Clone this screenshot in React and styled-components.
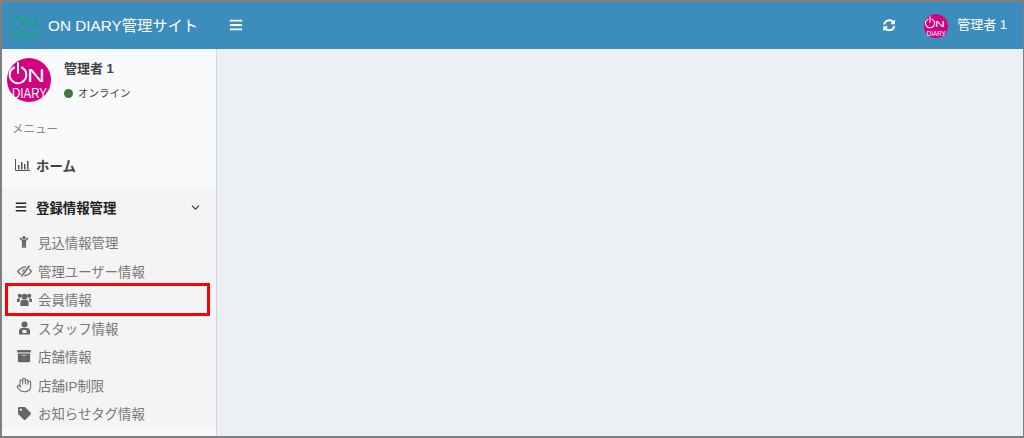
import React from "react";
import styled, { createGlobalStyle } from "styled-components";
import { FaBars, FaChild, FaArchive, FaTag, FaSyncAlt } from "react-icons/fa";
import { ChevronDown, Hand } from "lucide-react";

const Global = createGlobalStyle`
  html, body { margin: 0; padding: 0; height: 100%; }
  body { font-family: "Liberation Sans", "Noto Sans CJK JP", sans-serif; background: #ecf0f5; }
`;
const Frame = styled.div`
  box-sizing: border-box; width: 1024px; height: 438px; overflow: hidden;
  border: solid #7f7f7f; border-width: 2px 1px 2px 2px;
  display: flex; flex-direction: column; background: #ecf0f5;
`;
const Header = styled.header`
  height: 47px; flex: none; background: #3c8dbc; color: #fff;
  display: flex; align-items: center;
`;
const Brand = styled.div`
  width: 214px; flex: none; display: flex; align-items: center; padding-left: 6px; box-sizing: border-box; gap: 6px;
  font-size: 15.3px; white-space: nowrap;
`;
const BrandName = styled.span`
  margin-top: -4px;
`;
const MenuToggle = styled.div`
  font-size: 14px; display: flex; margin-left: 13px; margin-top: -1px;
`;
const HeaderRight = styled.div`
  margin-left: auto; display: flex; align-items: center; font-size: 13px; padding-right: 16px;
`;
const Refresh = styled.div`
  display: flex; font-size: 12.5px; margin-right: 29px; margin-top: -1px;
`;
const UserName = styled.span`
  margin-left: 9px; margin-top: -4px;
`;
const Body = styled.div`
  flex: 1; display: flex; min-height: 0;
`;
const Sidebar = styled.aside`
  width: 215px; flex: none; box-sizing: border-box; background: #f9fafc; border-right: 1px solid #d2d6de;
  display: flex; flex-direction: column;
`;
const Profile = styled.div`
  height: 72px; flex: none; display: flex; padding: 9px 0 0 5px; box-sizing: border-box;
`;
const ProfileInfo = styled.div`
  margin-left: 13px; padding-top: 3px;
`;
const ProfileName = styled.div`
  font-size: 13px; font-weight: bold; color: #444; line-height: 15px;
`;
const Status = styled.div`
  display: flex; align-items: center; gap: 5px; font-size: 10.5px; color: #444; margin-top: 10px; line-height: 14px;
`;
const Dot = styled.span`
  width: 9px; height: 9px; border-radius: 50%; background: #3c763d; display: block;
`;
const SectionLabel = styled.div`
  font-size: 11.5px; color: #888; height: 24px; line-height: 16px; padding-left: 10px;
`;
const HomeItem = styled.div`
  height: 44px; display: flex; align-items: center; padding-left: 13px; font-size: 13.4px; font-weight: bold; color: #444; flex: none; gap: 6px; margin-top: -2px;
`;
const Group = styled.div`
  background: #f4f4f5;
`;
const GroupHead = styled.div`
  height: 40px; display: flex; align-items: center; padding: 0 14px 0 13px; font-size: 13.4px; font-weight: bold; color: #222; gap: 9px;
`;
const Chevron = styled.span`
  margin-left: auto; display: flex; color: #333;
`;
const SubList = styled.div`
  display: flex; flex-direction: column; padding: 1px 0;
`;
const SubItem = styled.div`
  height: 28.5px; display: flex; align-items: center; position: relative; padding-left: 14px; font-size: 13.4px; color: #777; gap: 6px;
  ${p => p.$marked ? `&::after { content: ""; position: absolute; left: 3px; top: -2px; width: 205px; height: 33px; box-sizing: border-box; border: 3px solid #f00; }` : ""}
`;
const IconSlot = styled.span`
  width: 16px; flex: none; display: flex; justify-content: center; align-items: center; font-size: ${p => p.$size || 13}px; color: #666;
`;
const LogoSvg = styled.svg`
  display: block; flex: none; overflow: visible;
`;
const IconSvg = styled.svg`
  display: block;
`;

const Logo = ({ size, bg, fg }) => (
  <LogoSvg width={size} height={size} viewBox="0 0 44 44">
    {bg && <circle cx="22" cy="22" r="22" fill={bg} />}
    <path d="M7.200 9.500a8.300 8.300 0 1 0 7.600 0" fill="none" stroke={fg} strokeWidth="2" strokeLinecap="round" />
    <path d="M11 5v10" stroke={fg} strokeWidth="2" strokeLinecap="round" />
    <text x="20" y="23.500" fontFamily="Liberation Sans" fontSize="18" textLength="18" lengthAdjust="spacingAndGlyphs" fill={fg}>N</text>
    <text x="5" y="39.500" fontFamily="Liberation Sans" fontSize="14.500" textLength="35" lengthAdjust="spacingAndGlyphs" fill={fg}>DIARY</text>
  </LogoSvg>
);
const ChartIcon = () => (
  <IconSvg width="15" height="12" viewBox="0 0 15 12">
    <path d="M.5 0v11.500H15" fill="none" stroke="#555" strokeWidth="1" />
    <path d="M3 6h1.500v4.500H3zM6 3h1.500v7.500H6zM9 5h1.500v5.500H9zM12 2h1.500v8.500H12z" fill="#555" />
  </IconSvg>
);
const EyeIcon = () => (
  <IconSvg width="15" height="12" viewBox="0 0 15 12">
    <path d="M.8 6.500C3 3.500 5.500 2.200 7.800 2.200c2.400 0 4.600 1.300 6.500 4.300-2 3-4.200 4-6.500 4C5.300 10.500 3 9.500.8 6.500z" fill="none" stroke="#666" strokeWidth="1.300" />
    <circle cx="7.500" cy="6.300" r="2.300" fill="#666" />
    <path d="M12.500 .5L4.500 11.500" stroke="#f4f4f5" strokeWidth="3.200" />
    <path d="M12.500 .5L4.500 11.500" stroke="#666" strokeWidth="1.400" />
  </IconSvg>
);
const UsersIcon = () => (
  <IconSvg width="15" height="13" viewBox="0 0 15 13">
    <circle cx="2.800" cy="2.800" r="2.100" fill="#666" />
    <circle cx="12.200" cy="2.800" r="2.100" fill="#666" />
    <circle cx="7.500" cy="3.600" r="2.900" fill="#666" />
    <path d="M0 9V6.800C0 5.900.7 5.400 1.500 5.400h2c-.3 1-1 1.800-1 3.600zM15 9V6.800c0-.9-.7-1.400-1.500-1.400h-2c.3 1 1 1.800 1 3.600z" fill="#666" />
    <path d="M3.400 13V9.500c0-1.800 1.100-2.700 2.100-2.700h4c1 0 2.100.9 2.100 2.700V13z" fill="#666" />
  </IconSvg>
);
const StaffIcon = () => (
  <IconSvg width="13" height="14" viewBox="0 0 13 14">
    <circle cx="6.500" cy="3.500" r="3" fill="#666" />
    <path d="M1 13.500V10c0-2 1.500-3 3-3h5c1.500 0 3 1 3 3v3.500z" fill="#666" />
    <rect x="4.500" y="9" width="4" height="3" fill="#f4f4f5" />
  </IconSvg>
);

const items = [
  { icon: <FaChild />, size: 12, label: "見込情報管理" },
  { icon: <EyeIcon />, label: "管理ユーザー情報" },
  { icon: <UsersIcon />, label: "会員情報", marked: true },
  { icon: <StaffIcon />, label: "スタッフ情報" },
  { icon: <FaArchive />, size: 14, label: "店舗情報" },
  { icon: <Hand size={16} strokeWidth={1.6} color="#666" />, label: "店舗IP制限" },
  { icon: <FaTag />, size: 13, label: "お知らせタグ情報" },
];

export default function App() {
  return (
    <Frame>
      <Global />
      <Header>
        <Brand>
          <Logo size={34} fg="#12a57a" />
          <BrandName>ON DIARY管理サイト</BrandName>
        </Brand>
        <MenuToggle><FaBars /></MenuToggle>
        <HeaderRight>
          <Refresh><FaSyncAlt /></Refresh>
          <Logo size={24} bg="#d6007f" fg="#fff" />
          <UserName>管理者 1</UserName>
        </HeaderRight>
      </Header>
      <Body>
        <Sidebar>
          <Profile>
            <Logo size={44} bg="#d6007f" fg="#fff" />
            <ProfileInfo>
              <ProfileName>管理者 1</ProfileName>
              <Status><Dot />オンライン</Status>
            </ProfileInfo>
          </Profile>
          <SectionLabel>メニュー</SectionLabel>
          <HomeItem><ChartIcon />ホーム</HomeItem>
          <Group>
            <GroupHead>
              <FaBars style={{ fontSize: 12 }} />
              登録情報管理
              <Chevron><ChevronDown size={13} strokeWidth={2} /></Chevron>
            </GroupHead>
            <SubList>
              {items.map(i => (
                <SubItem key={i.label} $marked={i.marked}>
                  <IconSlot $size={i.size}>{i.icon}</IconSlot>
                  {i.label}
                </SubItem>
              ))}
            </SubList>
          </Group>
        </Sidebar>
      </Body>
    </Frame>
  );
}
